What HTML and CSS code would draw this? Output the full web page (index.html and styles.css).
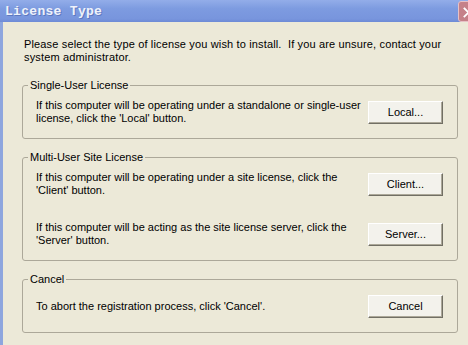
FILE: index.html
```html
<!DOCTYPE html>
<html lang="en">
<head>
  <meta charset="UTF-8">
  <title>License Type</title>
  <link rel="stylesheet" href="styles.css">
</head>
<body>
  <div class="window">
    <div class="titlebar">
      <span class="title">License Type</span>
      <span class="close" aria-label="Close">
        <svg width="21" height="21" viewBox="0 0 21 21">
          <path d="M6 6 L15 15 M15 6 L6 15" stroke="#fff" stroke-width="2" stroke-linecap="square"/>
        </svg>
      </span>
    </div>

    <div class="client">
      <p class="intro">Please select the type of license you wish to install.&nbsp; If you are unsure, contact your<br>system administrator.</p>

      <!-- Single-user -->
      <fieldset class="group">
        <legend>Single-User License</legend>
        <div class="row">
          <p>If this computer will be operating under a standalone or single-user<br>license, click the 'Local' button.</p>
          <button>Local...</button>
        </div>
      </fieldset>

      <!-- Site license -->
      <fieldset class="group">
        <legend>Multi-User Site License</legend>
        <div class="row">
          <p>If this computer will be operating under a site license, click the<br>'Client' button.</p>
          <button>Client...</button>
        </div>
        <div class="row">
          <p>If this computer will be acting as the site license server, click the<br>'Server' button.</p>
          <button>Server...</button>
        </div>
      </fieldset>

      <!-- Cancel -->
      <fieldset class="group">
        <legend>Cancel</legend>
        <div class="row">
          <p>To abort the registration process, click 'Cancel'.</p>
          <button>Cancel</button>
        </div>
      </fieldset>
    </div>
  </div>
</body>
</html>
```

FILE: styles.css
```css
*, *::before, *::after { box-sizing: border-box; }
html, body { margin: 0; height: 100%; overflow: hidden; }
body {
  background: #ece9d8; color: #000;
  font-family: "Liberation Sans", Arial, sans-serif; font-size: 11px;
}
.window { display: flex; flex-direction: column; height: 100%; }

/* Title bar */
.titlebar {
  display: flex; align-items: center; justify-content: space-between;
  height: 22px; overflow: hidden;
  background: linear-gradient(#93ade9, #7d9be0 40%, #7895dd 85%, #6e8bd6);
}
.title {
  padding-left: 5px; color: #eef2fb;
  font-family: "Liberation Mono", "DejaVu Sans Mono", monospace;
  font-size: 13px; font-weight: bold; letter-spacing: .3px;
  text-shadow: 1px 1px 0 #5d78c0;
}
.close {
  width: 21px; height: 21px; margin-right: -11px;
  background: #c58189; border: 1px solid #e7c1c6; border-radius: 3px;
  display: flex;
}

/* Client area */
.client {
  flex: 1;
  border-left: 3px solid #8ea6de;
  padding: 16px 10px 0 19px;
}
.intro { margin: 0 0 15px 2px; line-height: 13px; letter-spacing: .15px; }

.group {
  margin: 0 0 12px; padding: 7px 14px 13px 13px;
  border: 1px solid #aca899; border-radius: 3px;
}
.group legend {
  padding: 0 2px; margin-left: -8px; line-height: 13px;
}
.row {
  display: flex; align-items: center; justify-content: space-between;
  min-height: 26px;
}
.row + .row { margin-top: 24px; }
.row p { margin: 0; line-height: 13px; }

button {
  width: 75px; height: 23px; padding: 0;
  font: inherit; color: #000;
  background: #f3f2ec;
  border: 1px solid; border-color: #fff #716f64 #716f64 #fff;
  box-shadow: inset -1px -1px 0 #aca899;
}
```
